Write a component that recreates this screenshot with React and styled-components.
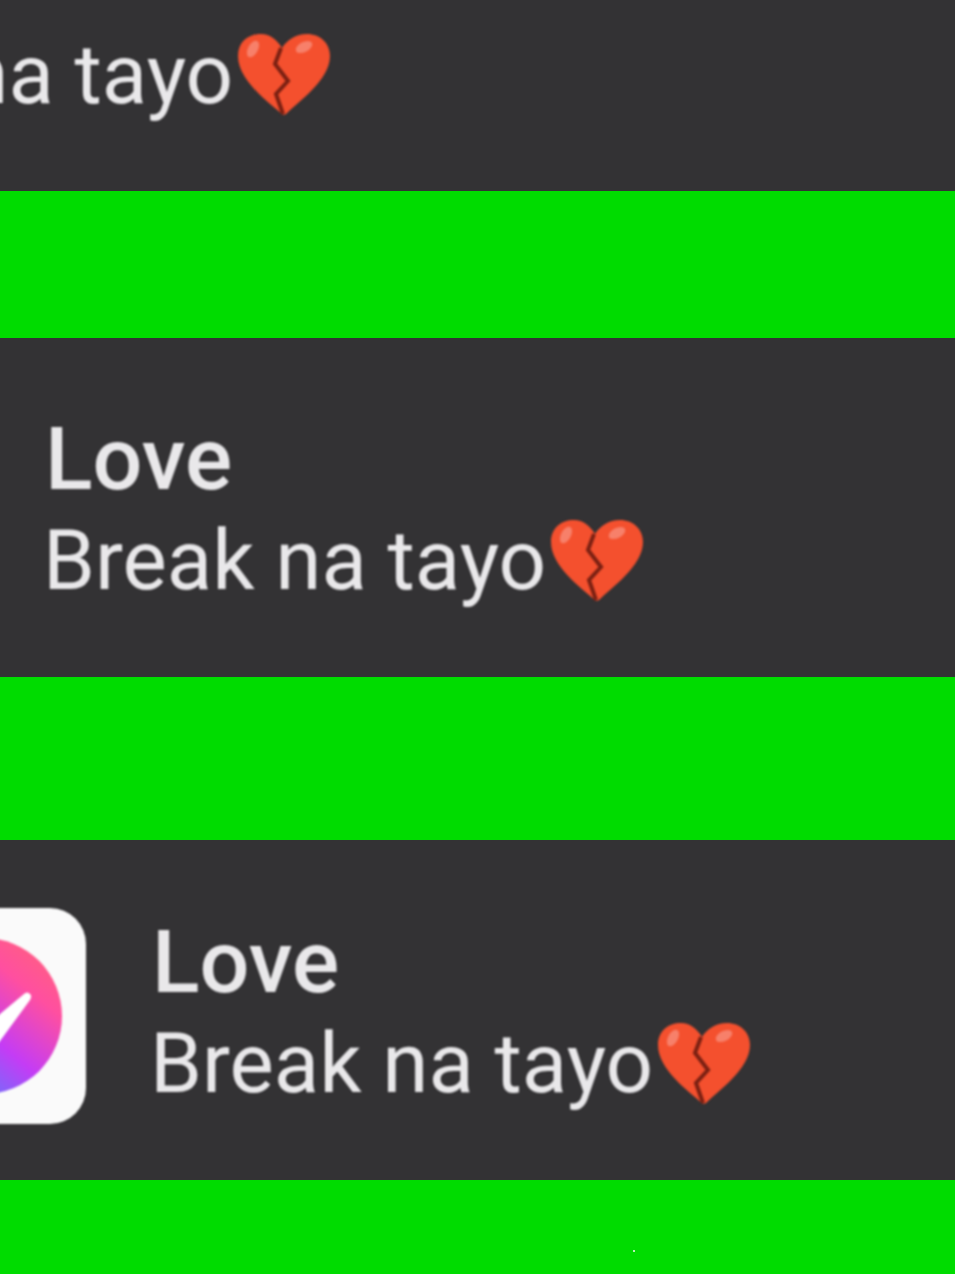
import * as React from "react";
import styled, { createGlobalStyle } from "styled-components";

const GlobalStyle = createGlobalStyle`
  html, body {
    margin: 0;
    padding: 0;
    background: #00dc00;
  }
  body {
    width: 955px;
    height: 1274px;
    overflow: hidden;
    font-family: Roboto, "Liberation Sans", sans-serif;
  }
`;

const Page = styled.div`
  position: relative;
  display: flex;
  flex-direction: column;
  width: 955px;
  height: 1274px;
  overflow: hidden;
  background: #00dc00;
`;

const Notification = styled.div`
  flex: none;
  display: flex;
  align-items: center;
  gap: 64px;
  box-sizing: border-box;
  height: ${(p) => p.$height}px;
  margin-top: ${(p) => p.$top}px;
  margin-bottom: ${(p) => p.$gap}px;
  overflow: hidden;
  background: #333234;
`;

const AppIcon = styled.div`
  flex: none;
  display: flex;
  align-items: center;
  justify-content: center;
  box-sizing: border-box;
  width: 216px;
  height: 216px;
  margin-top: 12px;
  margin-left: ${(p) => p.$shift}px;
  padding-left: 12px;
  border-radius: 36px;
  background: #fafafa;
  filter: blur(1.2px);
`;

const Body = styled.div`
  flex: none;
  display: flex;
  flex-direction: column;
  gap: 12px;
  padding-top: 5px;
  color: #e9e8ea;
  filter: blur(0.9px);
`;

const Title = styled.div`
  padding-left: 2px;
  font-size: 88px;
  font-weight: 500;
  line-height: 90px;
`;

const Message = styled.div`
  display: flex;
  align-items: center;
  gap: 5px;
  font-size: 83.5px;
  font-weight: 400;
  line-height: 90px;
  white-space: nowrap;
`;

const Speck = styled.span`
  position: absolute;
  left: 633px;
  top: 1250px;
  width: 2px;
  height: 2px;
  background: #b8f0b8;
`;

const MessengerLogo = () => (
  <svg width="156" height="156" viewBox="0 0 156 156">
    <defs>
      <linearGradient id="messenger" x1="0.15" y1="0.95" x2="0.85" y2="0.1">
        <stop offset="0" stopColor="#3f8cff" />
        <stop offset="0.45" stopColor="#c43cf5" />
        <stop offset="0.8" stopColor="#ff4fa0" />
        <stop offset="1" stopColor="#ff5c87" />
      </linearGradient>
    </defs>
    <circle cx="78" cy="78" r="78" fill="url(#messenger)" />
    <path d="M124 56C126 58 125 60 124 62L94 103L70 130L60 110L94 76L118 56C120 54 122 54 124 56Z" fill="#fff" />
  </svg>
);

const BrokenHeart = () => (
  <svg width="92" height="82" viewBox="0 0 92 82">
    <path
      d="M44 80C30 68 0 46 0 22 0 8 10 0 23 0c9 0 16 6 21 14C49 6 58 0 69 0c13 0 23 9 23 22 0 24-32 46-44 58-1 1-3 1-4 0Z"
      fill="#f4502e"
    />
    <ellipse cx="15" cy="15" rx="5" ry="9" transform="rotate(28 15 15)" fill="#f7806a" />
    <ellipse cx="66" cy="13" rx="9" ry="5" transform="rotate(-28 66 13)" fill="#f7806a" />
    <path d="M43 14L37 30L50 47L38 60L45 80" fill="none" stroke="#7a2012" strokeWidth="4" />
  </svg>
);

const items = [
  { shift: -550, top: -148, gap: 147, height: 339 },
  { shift: -237, top: 0, gap: 163, height: 339 },
  { shift: -130, top: 0, gap: 0, height: 340 },
];

export default function App() {
  return (
    <Page>
      <GlobalStyle />
      {items.map((item) => (
        <Notification key={item.shift} $top={item.top} $gap={item.gap} $height={item.height}>
          <AppIcon $shift={item.shift}>
            <MessengerLogo />
          </AppIcon>
          <Body>
            <Title>Love</Title>
            <Message>
              Break na tayo
              <BrokenHeart />
            </Message>
          </Body>
        </Notification>
      ))}
      <Speck />
    </Page>
  );
}
